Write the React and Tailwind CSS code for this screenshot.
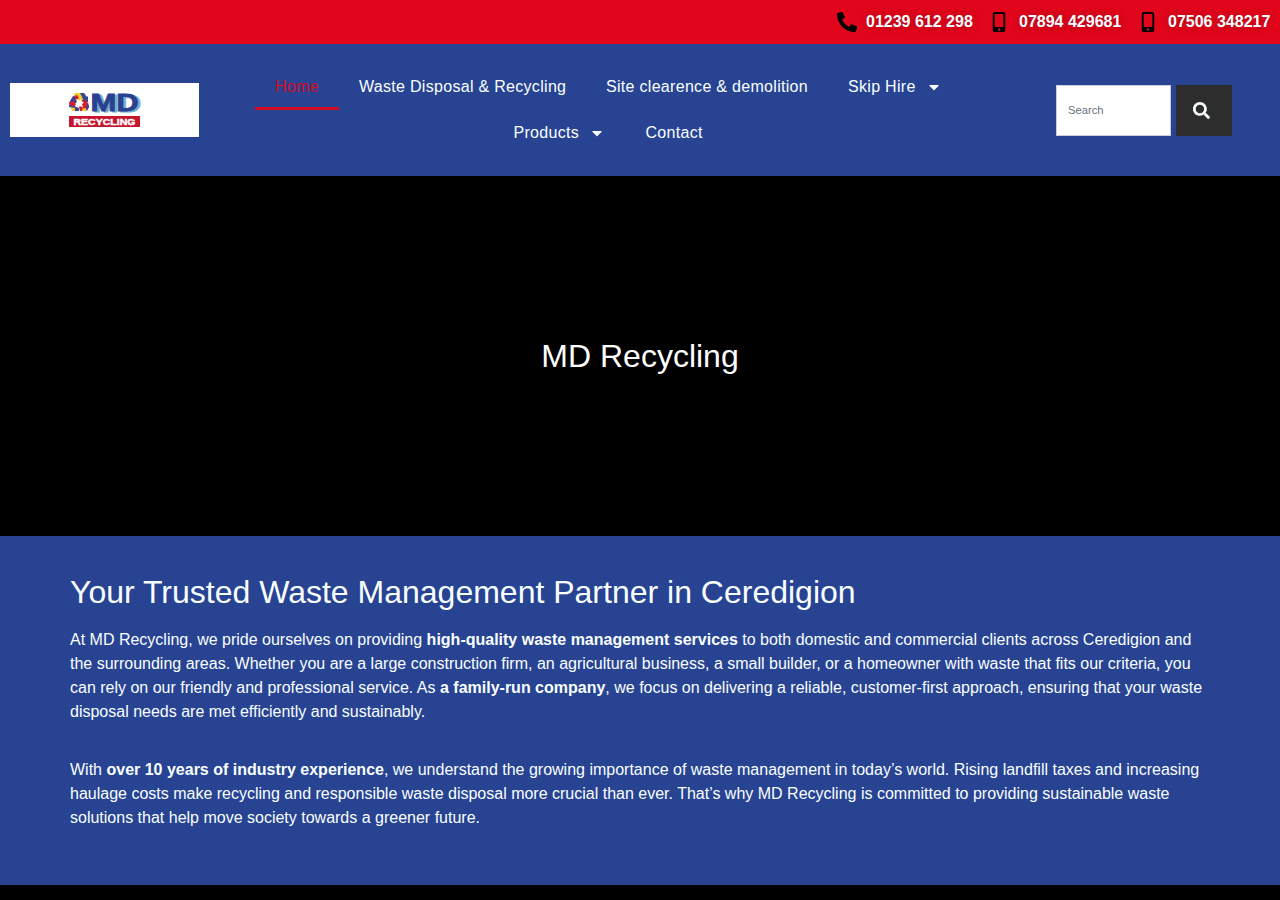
import { FaCaretDown, FaMobileAlt, FaPhoneAlt, FaSearch } from "react-icons/fa";

const phones = [
  { number: "01239 612 298", icon: FaPhoneAlt, width: "w-[107px] ml-[9px]" },
  { number: "07894 429681", icon: FaMobileAlt, width: "w-[103px] ml-[10px]" },
  { number: "07506 348217", icon: FaMobileAlt, width: "w-[102px] ml-[10px]" },
];

const links = [
  { label: "Home", active: true, width: "w-[84px]" },
  { label: "Waste Disposal & Recycling", width: "w-[247px]" },
  { label: "Site clearence & demolition", width: "w-[242px]" },
  { label: "Skip Hire", menu: true, width: "w-[134px]" },
  { label: "Products", menu: true, width: "w-[132px]" },
  { label: "Contact", width: "w-[98px]" },
];

const Logo = () => (
  <svg className="h-[54px] w-[189px]" viewBox="0 0 189 54" role="img" aria-label="MD Recycling">
    <rect width="189" height="54" fill="#fff" />
    {/* three chasing arrows around a star */}
    <path d="M65 10h7l3 5-3 4h-5l-4-4z" fill="#f3cf26" />
    <path d="M70 10h4l3 4 1-1v6l-6-1 1-2z" fill="#33479a" />
    <path d="M63 13l3 1 1 5-3 4-5 1 1-6z" fill="#33479a" />
    <path d="M64 13l3-1 2 3-3 2z" fill="#d71f32" />
    <path d="M59 19l5-1 2 3-2 4-4-1z" fill="#d71f32" />
    <path d="M59 22l5 1 5 2v3h-6z" fill="#33479a" />
    <path d="M61 24l4 1v3h-3z" fill="#f3cf26" />
    <path d="M73 17l4 1 2 6-3 4h-6l-1-4z" fill="#d71f32" />
    <path d="M78 19l1 5-2 4-1-3z" fill="#33479a" />
    <path d="M72 26l4-1v3h-4z" fill="#f3cf26" />
    <path d="M66 16l3 1.5 2-1.5.5 2.5 2.500 1-2 1.500 1 3.500-3-1.500-2 2-.5-3-2.500-1 2-2z" fill="#fff" />
    <g className="font-['Liberation_Sans',Arial,sans-serif]" fontWeight="700">
      <text x="83" y="29" fontSize="24" textLength="48" lengthAdjust="spacingAndGlyphs" fill="#77acd0" stroke="#77acd0" strokeWidth="1">MD</text>
      <text x="80.5" y="27.5" fontSize="24" textLength="48" lengthAdjust="spacingAndGlyphs" fill="#29418f" stroke="#29418f" strokeWidth=".8">MD</text>
      <rect x="59" y="33" width="71" height="11" fill="#c5162d" />
      <text x="63.5" y="42" fontSize="9.5" textLength="62" lengthAdjust="spacingAndGlyphs" fill="#fff" stroke="#fff" strokeWidth=".45">RECYCLING</text>
    </g>
  </svg>
);

const TopBar = () => (
  <div className="flex h-11 items-center justify-end bg-[#e2061c] pr-[10px]">
    {phones.map(({ number, icon: Icon, width }, i) => (
      <a key={number} href="#" className={i > 0 ? "ml-4 flex items-center" : "flex items-center"}>
        <Icon className="size-5 text-black" />
        <span className={`${width} whitespace-nowrap font-bold leading-6 [text-shadow:0_0_10px_rgba(0,0,0,0.3)]`}>
          {number}
        </span>
      </a>
    ))}
  </div>
);

const Header = () => (
  <header className="flex h-[132px] items-center bg-[#294393] px-[10px]">
    <a href="#">
      <Logo />
    </a>
    <nav className="ml-[10px] flex w-[799px] flex-wrap justify-center">
      {links.map(({ label, active, menu, width }) => (
        <a
          key={label}
          href="#"
          className={`${width} ${active ? "border-[#d20b26] text-[#d20b26]" : "border-transparent"} flex h-[46px] items-center whitespace-nowrap border-b-3 px-5 pt-[3px] leading-5 tracking-[0.3px]`}
        >
          {label}
          {menu && <FaCaretDown className="ml-[10px] size-4" />}
        </a>
      ))}
    </nav>
    <form className="ml-12 flex gap-[5px]">
      <input
        type="search"
        placeholder="Search"
        className="h-[51px] w-[115px] border border-[#ccd] bg-white px-[11px] text-[11.2px] text-gray-800 outline-none placeholder:text-[#68717c]"
      />
      <button type="button" aria-label="Search" className="flex h-[51px] w-14 items-center justify-center bg-[#2d2d2d]">
        <FaSearch className="mr-[5px] size-[17px]" />
      </button>
    </form>
  </header>
);

const App = () => (
  <div className="h-[900px] overflow-hidden bg-black font-['Liberation_Sans',Arial,sans-serif] text-base text-[#f8ffff]">
    <TopBar />
    <Header />

    {/* Hero */}
    <section className="flex h-[360px] items-center justify-center bg-black">
      <h1 className="text-[32px] leading-8 text-white">MD Recycling</h1>
    </section>

    {/* Intro */}
    <section className="h-[349px] bg-[#294393] px-[70px] pt-10">
      <h2 className="text-[32px] leading-8">Your Trusted Waste Management Partner in Ceredigion</h2>
      <p className="mt-5 leading-6">
        At MD Recycling, we pride ourselves on providing <strong>high-quality waste management services</strong> to
        both domestic and commercial clients across Ceredigion and the surrounding areas. Whether you are a large
        construction firm, an agricultural business, a small builder, or a homeowner with waste that fits our
        criteria, you can rely on our friendly and professional service. As <strong>a family-run company</strong>, we
        focus on delivering a reliable, customer-first approach, ensuring that your waste disposal needs are met
        efficiently and sustainably.
      </p>
      <p className="mt-[34px] leading-6">
        With <strong>over 10 years of industry experience</strong>, we understand the growing importance of waste
        management in today’s world. Rising landfill taxes and increasing haulage costs make recycling and responsible
        waste disposal more crucial than ever. That’s why MD Recycling is committed to providing sustainable waste
        solutions that help move society towards a greener future.
      </p>
    </section>
  </div>
);

export default App;
